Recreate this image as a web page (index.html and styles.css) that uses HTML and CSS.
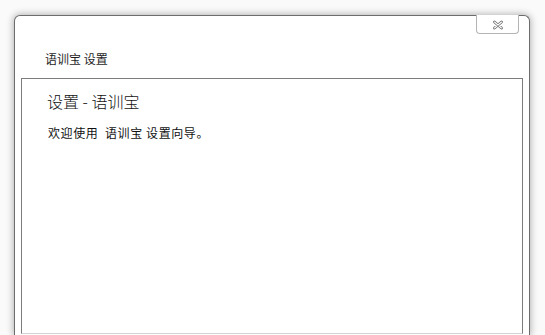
FILE: index.html
```html
<!DOCTYPE html>
<html lang="zh-CN">
<head>
<meta charset="utf-8">
<title>语训宝 设置</title>
<link rel="stylesheet" href="styles.css">
</head>
<body>
<div class="window">
  <button class="close" aria-label="关闭">
    <svg width="12" height="10" viewBox="0 0 12 10">
      <path d="M2.5 2 L9.5 8 M9.5 2 L2.5 8" stroke="#6e6e6e" stroke-width="2.8" stroke-linecap="round" fill="none"/>
      <path d="M2.5 2 L9.5 8 M9.5 2 L2.5 8" stroke="#ffffff" stroke-width="1.1" stroke-linecap="round" fill="none"/>
    </svg>
  </button>
  <div class="titlebar">语训宝 设置</div>
  <div class="panel">
    <h1 class="heading">设置 - 语训宝</h1>
    <p class="welcome">欢迎使用&nbsp;&nbsp;语训宝 设置向导。</p>
  </div>
</div>
</body>
</html>
```
FILE: styles.css
```css
html, body {
  margin: 0;
  padding: 0;
  overflow: hidden;
  height: 335px;
}
body {
  background: #fafafa;
  padding: 15px 0 0 14px;
  box-sizing: border-box;
  font-family: "Noto Sans CJK SC", "Noto Sans", "Liberation Sans", sans-serif;
  color: #1a1a1a;
}
.window {
  position: relative;
  width: 516px;
  height: 320px;
  box-sizing: border-box;
  background: #ffffff;
  border: 1px solid #6c6c6c;
  border-bottom: none;
  border-radius: 6px 6px 0 0;
  box-shadow: 0 0 7px 1px rgba(0, 0, 0, 0.28);
  display: flex;
  flex-direction: column;
}
.close {
  position: absolute;
  top: -1px;
  right: 10px;
  width: 43px;
  height: 19px;
  box-sizing: border-box;
  padding: 0;
  margin: 0;
  background: #ffffff;
  border: 1px solid #b4b4b4;
  border-top: none;
  border-radius: 0 0 4px 4px;
  display: flex;
  align-items: center;
  justify-content: center;
}
.close svg {
  display: block;
  margin-top: 1px;
}
.titlebar {
  font-size: 12px;
  line-height: 16px;
  padding: 35px 0 0 30px;
  height: 51px;
  box-sizing: border-box;
  color: #1e1e1e;
  margin-bottom: 11px;
}
.panel {
  flex: 1;
  margin: 0 6px 1px;
  border: 1px solid #7c7c7c;
  border-bottom-color: #d2d2d2;
  padding: 12px 0 0 25px;
}
.heading {
  margin: 0;
  font-size: 16px;
  line-height: 20px;
  font-weight: 300;
  color: #111111;
}
.welcome {
  margin: 14px 0 0 1px;
  font-size: 12px;
  line-height: 16px;
  letter-spacing: 0.6px;
  color: #111111;
}
```
